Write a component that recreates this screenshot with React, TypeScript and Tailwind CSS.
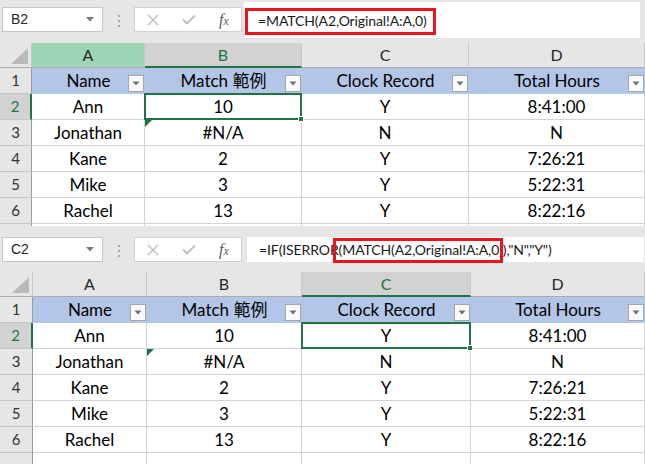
import React from "react";

type ColState = "normal" | "green" | "selected";

const DATA: string[][] = [
  ["Name", "Match 範例", "Clock Record", "Total Hours"],
  ["Ann", "10", "Y", "8:41:00"],
  ["Jonathan", "#N/A", "N", "N"],
  ["Kane", "2", "Y", "7:26:21"],
  ["Mike", "3", "Y", "5:22:31"],
  ["Rachel", "13", "Y", "8:22:16"],
  ["", "", "", ""],
];

const LETTERS = ["A", "B", "C", "D"];

const colHeadCls: Record<ColState, string> = {
  normal: "bg-[#e6e6e6] border-b border-b-[#ababab] text-[#262626]",
  green: "bg-[#9fd5b7] border-b border-b-[#ababab] text-[#262626]",
  selected: "bg-[#d2d2d2] border-b-2 border-b-[#217346] text-[#217346]",
};

function DropBtn() {
  return (
    <div className="absolute right-[1px] bottom-[2px] w-[16px] h-[17px] bg-[#fafafa] border border-[#a6a6a6] flex items-center justify-center">
      <svg width="8" height="5" viewBox="0 0 8 5">
        <polygon points="0.5,0.5 7.5,0.5 4,4.5" fill="#707070" />
      </svg>
    </div>
  );
}

function Sheet({
  gridCls,
  colStates,
  selCol,
}: {
  gridCls: string;
  colStates: ColState[];
  selCol: number;
}) {
  const cells: React.ReactNode[] = [];
  cells.push(
    <div
      key="corner"
      className="relative bg-[#e6e6e6] border-r border-r-[#c6c6c6] border-b border-b-[#ababab]"
    >
      <svg
        className="absolute right-[3px] bottom-[3px]"
        width="17"
        height="16"
        viewBox="0 0 17 16"
      >
        <polygon points="17,0 17,16 0,16" fill="#b9b9b9" />
      </svg>
    </div>
  );
  LETTERS.forEach((l, i) => {
    cells.push(
      <div
        key={"ch" + l}
        className={`flex items-center justify-center text-[16px] border-r border-r-[#c6c6c6] ${colHeadCls[colStates[i]]}`}
      >
        {l}
      </div>
    );
  });
  DATA.forEach((row, ri) => {
    const rowNum = ri + 1;
    const selRow = rowNum === 2;
    cells.push(
      <div
        key={"rh" + rowNum}
        className={`flex items-center justify-center text-[15px] border-b border-b-[#c6c6c6] ${
          selRow
            ? "bg-[#d2d2d2] border-r-2 border-r-[#217346] text-[#217346]"
            : "bg-[#e6e6e6] border-r border-r-[#9b9b9b] text-[#333333]"
        }`}
      >
        {rowNum < 7 ? rowNum : ""}
      </div>
    );
    row.forEach((v, ci) => {
      if (rowNum === 1) {
        cells.push(
          <div
            key={"c" + rowNum + ci}
            className="relative flex items-center justify-center bg-[#b4c6e7] text-[17px] text-black"
          >
            <span>{v}</span>
            <DropBtn />
          </div>
        );
      } else {
        cells.push(
          <div
            key={"c" + rowNum + ci}
            className="relative flex items-center justify-center bg-white border-r border-b border-[#d4d4d4] text-[17px] text-black"
          >
            {v && <span>{v}</span>}
            {rowNum === 3 && ci === 1 && (
              <svg
                className="absolute left-0 top-0"
                width="7"
                height="7"
                viewBox="0 0 7 7"
              >
                <polygon points="0,0 7,0 0,7" fill="#217346" />
              </svg>
            )}
            {rowNum === 2 && ci === selCol && (
              <div className="absolute -inset-[1px] z-10 border-2 border-[#217346]">
                <div className="absolute -right-[4px] -bottom-[4px] w-[6px] h-[6px] bg-[#217346] border border-white" />
              </div>
            )}
          </div>
        );
      }
    });
  });
  return <div className={`grid ${gridCls}`}>{cells}</div>;
}

function NameBox({ name }: { name: string }) {
  return (
    <div className="w-[101px] h-[25px] bg-white border border-[#c6c6c6] flex items-center justify-between pl-[8px] pr-[8px] shrink-0">
      <span className="text-[14px] text-[#262626] font-['Liberation_Sans',sans-serif]">
        {name}
      </span>
      <svg width="8" height="5" viewBox="0 0 8 5">
        <polygon points="0,0 8,0 4,4.5" fill="#7a7a7a" />
      </svg>
    </div>
  );
}

function Dots() {
  return (
    <div className="w-[31px] flex flex-col items-center gap-[3px] pt-[8px] shrink-0">
      <div className="w-[2px] h-[2px] bg-[#a8a8a8]" />
      <div className="w-[2px] h-[2px] bg-[#a8a8a8]" />
      <div className="w-[2px] h-[2px] bg-[#a8a8a8]" />
    </div>
  );
}

function FxBox() {
  return (
    <div className="w-[108px] h-[25px] bg-white border border-[#d0d0d0] flex items-center shrink-0">
      <div className="w-[36px] flex justify-center">
        <svg width="12" height="12" viewBox="0 0 12 12">
          <path d="M1 1 L11 11 M11 1 L1 11" stroke="#bdbdbd" strokeWidth="1.4" />
        </svg>
      </div>
      <div className="w-[36px] flex justify-center">
        <svg width="14" height="11" viewBox="0 0 14 11">
          <path d="M1 5.5 L5 9.5 L13 1.5" stroke="#bdbdbd" strokeWidth="1.8" fill="none" />
        </svg>
      </div>
      <div className="w-[34px] flex justify-center">
        <span className="font-['Liberation_Serif',serif] italic text-[16px] leading-none text-[#5a5a5a]">
          f<span className="text-[12px]">x</span>
        </span>
      </div>
    </div>
  );
}

const formulaFont =
  "font-['Lato',sans-serif] text-[14px] tracking-[-0.1px] text-[#1a1a1a] whitespace-nowrap";

export default function App() {
  return (
    <div className="w-[645px] h-[464px] overflow-hidden bg-[#e6e6e6] font-['Lato','Noto_Sans_CJK_TC',sans-serif]">
      {/* Top section */}
      <div className="h-[226px] overflow-hidden">
        <div className="relative h-[43px] flex items-start pl-[2px]">
          <div className="mt-[7px] flex items-start">
            <NameBox name="B2" />
            <Dots />
            <FxBox />
          </div>
          <div className={`ml-[2px] mt-[2px] w-[396px] h-[36px] bg-white flex items-center pl-[14px] ${formulaFont}`}>
            =MATCH(A2,Original!A:A,0)
          </div>
          <div className="absolute left-[245px] top-[8px] w-[191px] h-[27px] border-[3px] border-[#e8141e]" />
        </div>
        <Sheet
          gridCls="grid-cols-[32px_113px_157px_167px_176px] grid-rows-[25px_repeat(7,26px)]"
          colStates={["green", "selected", "normal", "normal"]}
          selCol={1}
        />
      </div>
      {/* Bottom section */}
      <div className="h-[238px] overflow-hidden">
        <div className="relative h-[46px] flex items-start pl-[2px]">
          <div className="mt-[11px] flex items-start">
            <NameBox name="C2" />
            <Dots />
            <FxBox />
          </div>
          <div className={`ml-[5px] mt-[11px] w-[397px] h-[25px] bg-white flex items-center pl-[12px] ${formulaFont}`}>
            =IF(ISERROR(MATCH(A2,Original!A:A,0)),"N","Y")
          </div>
          <div className="absolute left-[333px] top-[12px] w-[170px] h-[25px] border-[3px] border-[#e8141e]" />
        </div>
        <Sheet
          gridCls="grid-cols-[33px_114px_155px_169px_174px] grid-rows-[25px_repeat(7,26px)]"
          colStates={["normal", "normal", "selected", "normal"]}
          selCol={2}
        />
      </div>
    </div>
  );
}
